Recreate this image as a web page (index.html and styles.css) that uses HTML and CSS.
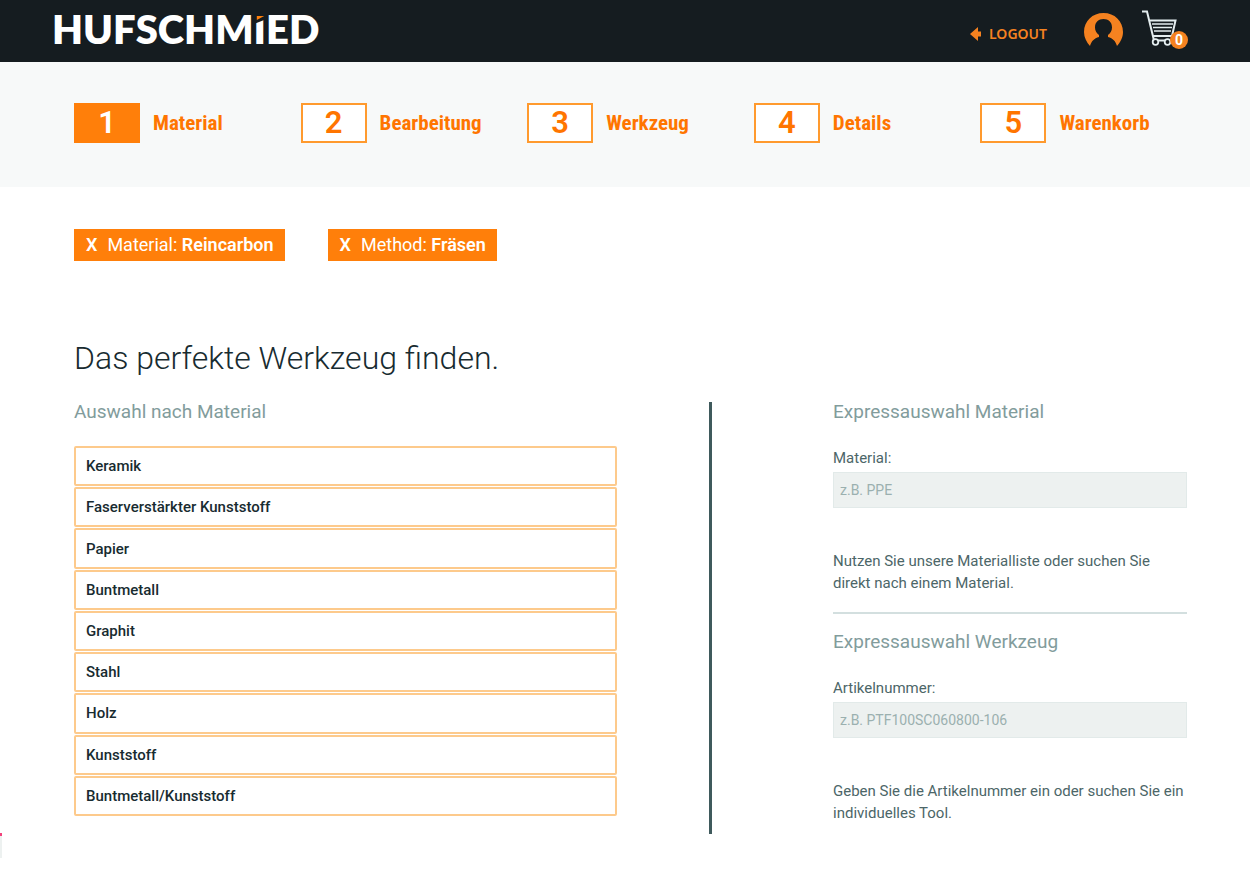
FILE: index.html
```html
<!DOCTYPE html>
<html lang="de">
	<head>
		<meta charset="UTF-8" />
		<meta name="viewport" content="width=device-width, initial-scale=1.0" />
		<title>Hufschmied</title>
		<link rel="stylesheet" href="styles.css">
	</head>
	<body>
		<header class="header">
			<a class="logo" href="#">HUFSCHM<span class="logo-i">I<svg class="logo-mark" viewBox="0 0 11 11" preserveAspectRatio="none" aria-hidden="true"><path d="M0 0h11v5L0 10z" fill="#151c20" /><path d="M2.500 2h6.500L2.500 6z" fill="#ff7f0a" /></svg></span>ED</a>
			<nav class="header-nav">
				<a class="logout" href="#">
					<svg width="11" height="14" viewBox="0 0 11 14" aria-hidden="true"><path d="M0 7L8 0v4.500L11 4.500v5L8 9.500V14z" fill="#f58220" /></svg>
					LOGOUT
				</a>
				<a class="account" href="#" aria-label="Konto">
					<svg width="39" height="35" viewBox="0 0 39 35" aria-hidden="true">
						<path d="M6 34C2.500 30 0 25.500 0 20 0 9 8.500 1 19.500 1S39 9 39 20c0 5.500-2.500 10-6 14-1.500-5-4-7.500-9-9v-2c2.500-1.500 4-4.500 4-7.500C28 10 24.500 7 19.500 7S11 10 11 15.500c0 3 1.500 6 4 7.500v2c-5 1.500-7.500 4-9 9z" fill="#f58220" />
					</svg>
				</a>
				<a class="cart" href="#" aria-label="Warenkorb">
					<svg width="36" height="36" viewBox="0 0 36 36" fill="none" stroke="#e4edef" aria-hidden="true">
						<path d="M0 1.500h5L12 30.500h16" stroke-width="2" />
						<path d="M8 10.500h25.500L30 26H11" stroke-width="2" />
						<path d="M10 14h21M11 17.500h19M12 21h17" stroke-width="1.500" />
						<circle cx="13.500" cy="32" r="2.800" fill="#151c20" stroke-width="1.800" />
						<circle cx="25.500" cy="32" r="2.800" fill="#151c20" stroke-width="1.800" />
					</svg>
					<span class="cart-count">0</span>
				</a>
			</nav>
		</header>

		<nav class="steps">
			<a class="step active" href="#"><span class="step-number">1</span>Material</a>
			<a class="step" href="#"><span class="step-number">2</span>Bearbeitung</a>
			<a class="step" href="#"><span class="step-number">3</span>Werkzeug</a>
			<a class="step" href="#"><span class="step-number">4</span>Details</a>
			<a class="step" href="#"><span class="step-number">5</span>Warenkorb</a>
		</nav>

		<main class="content">
			<div class="filters">
				<button class="filter" type="button"><b>X</b><span>Material: <b>Reincarbon</b></span></button>
				<button class="filter" type="button"><b>X</b><span>Method: <b>Fräsen</b></span></button>
			</div>

			<h1>Das perfekte Werkzeug finden.</h1>

			<div class="columns">
				<section class="selection">
					<h2>Auswahl nach Material</h2>
					<div class="material-list">
						<button class="material" type="button">Keramik</button>
						<button class="material" type="button">Faserverstärkter Kunststoff</button>
						<button class="material" type="button">Papier</button>
						<button class="material" type="button">Buntmetall</button>
						<button class="material" type="button">Graphit</button>
						<button class="material" type="button">Stahl</button>
						<button class="material" type="button">Holz</button>
						<button class="material" type="button">Kunststoff</button>
						<button class="material" type="button">Buntmetall/Kunststoff</button>
					</div>
				</section>

				<aside class="express">
					<form class="express-form">
						<h2>Expressauswahl Material</h2>
						<label for="material">Material:</label>
						<input type="text" id="material" placeholder="z.B. PPE" />
						<p>Nutzen Sie unsere Materialliste oder suchen Sie direkt nach einem Material.</p>
					</form>
					<form class="express-form">
						<h2>Expressauswahl Werkzeug</h2>
						<label for="article">Artikelnummer:</label>
						<input type="text" id="article" placeholder="z.B. PTF100SC060800-106" />
						<p>Geben Sie die Artikelnummer ein oder suchen Sie ein individuelles Tool.</p>
					</form>
				</aside>
			</div>
		</main>
		<div class="edge-tab"></div>
	</body>
</html>
```
FILE: styles.css
```css
* {
	box-sizing: border-box;
}
body {
	margin: 0;
	font-family: Roboto, sans-serif;
	font-size: 15px;
	line-height: 22px;
	color: #4c6668;
	background: #fff;
}
a {
	text-decoration: none;
}
button,
input {
	font: inherit;
}
h1,
h2,
p {
	margin: 0;
}

/* header */
.header {
	display: flex;
	align-items: flex-start;
	justify-content: space-between;
	height: 62px;
	padding: 0 62px 0 52px;
	background: #151c20;
}
.logo {
	font-family: Lato, sans-serif;
	font-size: 40px;
	font-weight: 800;
	line-height: 58px;
	color: #fff;
}
.logo-i {
	position: relative;
}
.logo-mark {
	position: absolute;
	top: 9px;
	left: 0;
	width: 100%;
	height: 11px;
}
.header-nav {
	display: flex;
	align-items: center;
	padding-top: 8px;
}
.logout {
	display: flex;
	align-items: center;
	gap: 8px;
	margin-right: 37px;
	padding-top: 12px;
	font-family: "Noto Sans", sans-serif;
	font-size: 14px;
	font-weight: 600;
	color: #f58220;
}
.account,
.cart {
	display: flex;
}
.account {
	padding-top: 4px;
}
.cart {
	position: relative;
	margin-left: 19px;
	padding-right: 10px;
}
.cart-count {
	position: absolute;
	right: 0;
	bottom: -3px;
	width: 18px;
	height: 18px;
	border-radius: 50%;
	background: #f58220;
	color: #fff;
	font-size: 14px;
	font-weight: 700;
	line-height: 18px;
	text-align: center;
}

/* steps */
.steps {
	display: grid;
	grid-template-columns: repeat(5, 1fr);
	padding: 41px 43px 44px 74px;
	background: #f7f9f9;
}
.step {
	display: flex;
	align-items: center;
	gap: 13px;
	font-family: "Roboto Condensed", Roboto, sans-serif;
	font-size: 21px;
	font-weight: 700;
	color: #ff7500;
}
.step-number {
	width: 66px;
	border: 2px solid #ff9a2e;
	background: #fff;
	font-family: Roboto, sans-serif;
	font-size: 31px;
	font-weight: 600;
	line-height: 36px;
	text-align: center;
}
.step.active .step-number {
	border-color: #ff7f0a;
	background: #ff7f0a;
	color: #fff;
}

/* content */
.content {
	padding: 42px 63px 41px 74px;
}
.filters {
	display: flex;
	gap: 43px;
	margin-bottom: 77px;
}
.filter {
	display: flex;
	gap: 10px;
	padding: 0 11px 0 12px;
	border: 0;
	background: #ff7f0a;
	color: #fff;
	font-size: 18px;
	line-height: 32px;
	cursor: pointer;
}
.filter b {
	font-weight: 600;
}
h1 {
	margin-bottom: 24px;
	font-size: 32px;
	font-weight: 300;
	line-height: 40px;
	color: #182b30;
}
h2 {
	margin-bottom: 24px;
	font-size: 19px;
	font-weight: 400;
	line-height: 20px;
	color: #829c9c;
}
.columns {
	display: grid;
	grid-template-columns: 638fr 354fr;
	gap: 121px;
}
.selection {
	display: flex;
	flex-direction: column;
	padding: 0 92px 18px 0;
	border-right: 3px solid #3f5a5c;
}
.material-list {
	display: grid;
	flex: 1;
	gap: 1px;
}
.material {
	min-height: 40px;
	padding: 0 10px;
	border: 2px solid #fdca8c;
	border-radius: 2px;
	background: #fff;
	color: #182b30;
	font-size: 15px;
	font-weight: 500;
	text-align: left;
	cursor: pointer;
}
.express-form {
	display: flex;
	flex-direction: column;
	padding-bottom: 18px;
}
.express-form + .express-form {
	padding: 18px 0 10px;
	border-top: 2px solid #d3dfdf;
}
.express-form h2 {
	margin-bottom: 25px;
}
.express-form input {
	height: 36px;
	margin: 3px 0 42px;
	padding: 0 6px;
	border: 1px solid #e2eae9;
	border-radius: 0;
	background: #edf1f0;
	font-size: 14px;
}
.express-form input::placeholder {
	color: #9bb0af;
	opacity: 1;
}

/* tab peeking in from the left edge */
.edge-tab {
	position: fixed;
	left: 0;
	bottom: 17px;
	width: 2px;
	height: 25px;
	border-top: 3px solid #f2427c;
	background: #edf1f0;
}
```
